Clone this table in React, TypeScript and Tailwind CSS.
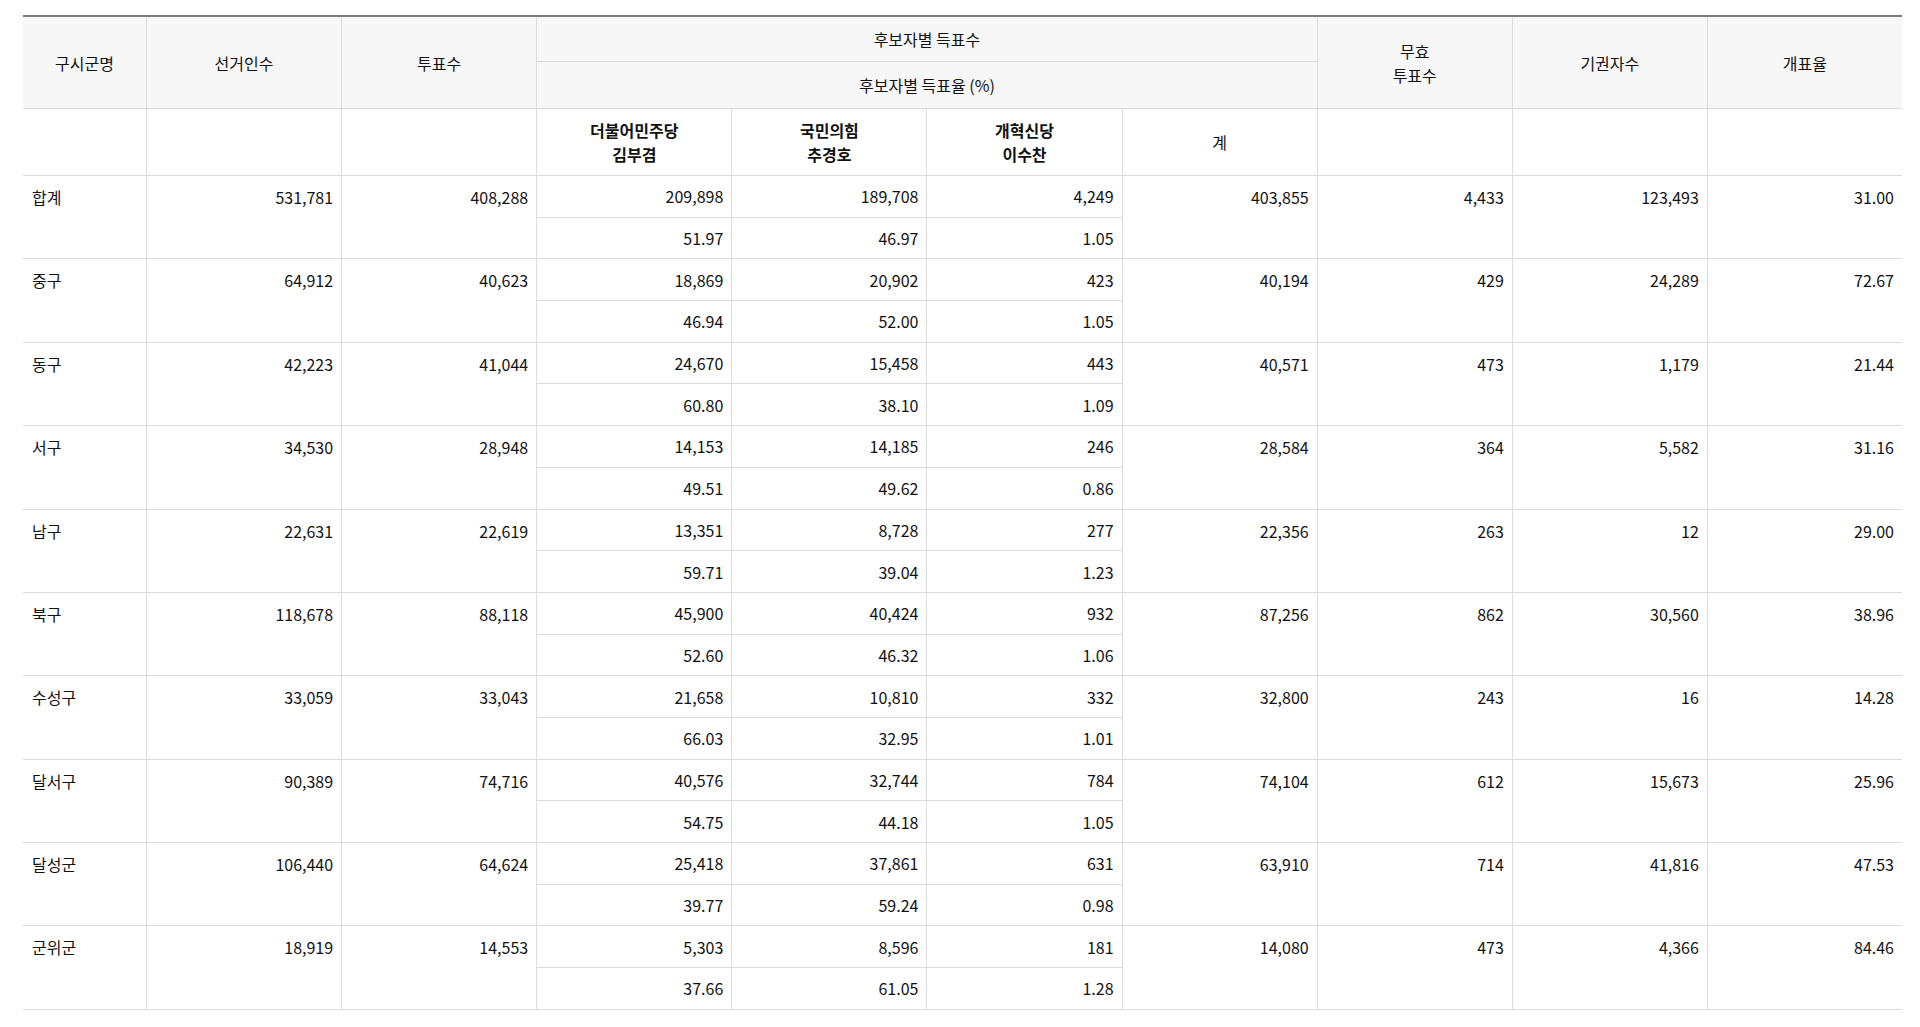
type Cand = [string, string];
type Row = {
  name: string;
  voters: string;
  votes: string;
  cands: [Cand, Cand, Cand];
  total: string;
  invalid: string;
  abstain: string;
  rate: string;
};

const rows: Row[] = [
  { name: "합계", voters: "531,781", votes: "408,288", cands: [["209,898", "51.97"], ["189,708", "46.97"], ["4,249", "1.05"]], total: "403,855", invalid: "4,433", abstain: "123,493", rate: "31.00" },
  { name: "중구", voters: "64,912", votes: "40,623", cands: [["18,869", "46.94"], ["20,902", "52.00"], ["423", "1.05"]], total: "40,194", invalid: "429", abstain: "24,289", rate: "72.67" },
  { name: "동구", voters: "42,223", votes: "41,044", cands: [["24,670", "60.80"], ["15,458", "38.10"], ["443", "1.09"]], total: "40,571", invalid: "473", abstain: "1,179", rate: "21.44" },
  { name: "서구", voters: "34,530", votes: "28,948", cands: [["14,153", "49.51"], ["14,185", "49.62"], ["246", "0.86"]], total: "28,584", invalid: "364", abstain: "5,582", rate: "31.16" },
  { name: "남구", voters: "22,631", votes: "22,619", cands: [["13,351", "59.71"], ["8,728", "39.04"], ["277", "1.23"]], total: "22,356", invalid: "263", abstain: "12", rate: "29.00" },
  { name: "북구", voters: "118,678", votes: "88,118", cands: [["45,900", "52.60"], ["40,424", "46.32"], ["932", "1.06"]], total: "87,256", invalid: "862", abstain: "30,560", rate: "38.96" },
  { name: "수성구", voters: "33,059", votes: "33,043", cands: [["21,658", "66.03"], ["10,810", "32.95"], ["332", "1.01"]], total: "32,800", invalid: "243", abstain: "16", rate: "14.28" },
  { name: "달서구", voters: "90,389", votes: "74,716", cands: [["40,576", "54.75"], ["32,744", "44.18"], ["784", "1.05"]], total: "74,104", invalid: "612", abstain: "15,673", rate: "25.96" },
  { name: "달성군", voters: "106,440", votes: "64,624", cands: [["25,418", "39.77"], ["37,861", "59.24"], ["631", "0.98"]], total: "63,910", invalid: "714", abstain: "41,816", rate: "47.53" },
  { name: "군위군", voters: "18,919", votes: "14,553", cands: [["5,303", "37.66"], ["8,596", "61.05"], ["181", "1.28"]], total: "14,080", invalid: "473", abstain: "4,366", rate: "84.46" },
];

const candidates = [
  ["더불어민주당", "김부겸"],
  ["국민의힘", "추경호"],
  ["개혁신당", "이수찬"],
];

const th = "border-b border-l border-[#dcdcdc] bg-[#f7f7f7] px-2 text-center align-middle font-normal";
const span = "border-b border-l border-[#dcdcdc] px-2 pt-[9px] text-right align-top";
const sub = "border-l border-[#dcdcdc] px-2 text-right align-middle";

export default function App() {
  return (
    <div className="min-h-[1027px] bg-white pl-[23px] pr-[18px] pt-[15px] text-base leading-6 text-[#111]" style={{ fontFamily: '"Noto Sans CJK KR", "Noto Sans", sans-serif' }}>
      <table className="w-full table-fixed border-separate border-spacing-0 border-t-2 border-[#7b7b7b]">
        <colgroup>
          <col className="w-[123px]" />
          {Array.from({ length: 9 }).map((_, i) => (
            <col key={i} />
          ))}
        </colgroup>
        <thead>
          <tr className="h-[45px]">
            <th rowSpan={2} className={`${th} border-l-0`}>구시군명</th>
            <th rowSpan={2} className={th}>선거인수</th>
            <th rowSpan={2} className={th}>투표수</th>
            <th colSpan={4} className={th}>후보자별 득표수</th>
            <th rowSpan={2} className={th}>
              무효
              <br />
              투표수
            </th>
            <th rowSpan={2} className={th}>기권자수</th>
            <th rowSpan={2} className={th}>개표율</th>
          </tr>
          <tr className="h-[47px]">
            <th colSpan={4} className={th}>후보자별 득표율 (%)</th>
          </tr>
          <tr className="h-[67px]">
            <th className="border-b border-[#dcdcdc]" />
            <th className="border-b border-l border-[#dcdcdc]" />
            <th className="border-b border-l border-[#dcdcdc]" />
            {candidates.map(([party, person]) => (
              <th key={party} className="border-b border-l border-[#dcdcdc] px-2 text-center align-middle font-semibold">
                {party}
                <br />
                {person}
              </th>
            ))}
            <th className="border-b border-l border-[#dcdcdc] px-2 text-center align-middle font-normal">계</th>
            <th className="border-b border-l border-[#dcdcdc]" />
            <th className="border-b border-l border-[#dcdcdc]" />
            <th className="border-b border-l border-[#dcdcdc]" />
          </tr>
        </thead>
        <tbody>
          {rows.map((r) => [
            <tr key={r.name + "a"} className="h-[41.7px]">
              <td rowSpan={2} className="border-b border-[#dcdcdc] pl-[9px] pr-2 pt-[9px] text-left align-top">{r.name}</td>
              <td rowSpan={2} className={span}>{r.voters}</td>
              <td rowSpan={2} className={span}>{r.votes}</td>
              {r.cands.map(([count], i) => (
                <td key={i} className={`${sub} border-b`}>{count}</td>
              ))}
              <td rowSpan={2} className={span}>{r.total}</td>
              <td rowSpan={2} className={span}>{r.invalid}</td>
              <td rowSpan={2} className={span}>{r.abstain}</td>
              <td rowSpan={2} className={span}>{r.rate}</td>
            </tr>,
            <tr key={r.name + "b"} className="h-[41.7px]">
              {r.cands.map(([, pct], i) => (
                <td key={i} className={`${sub} border-b`}>{pct}</td>
              ))}
            </tr>,
          ])}
        </tbody>
      </table>
    </div>
  );
}
